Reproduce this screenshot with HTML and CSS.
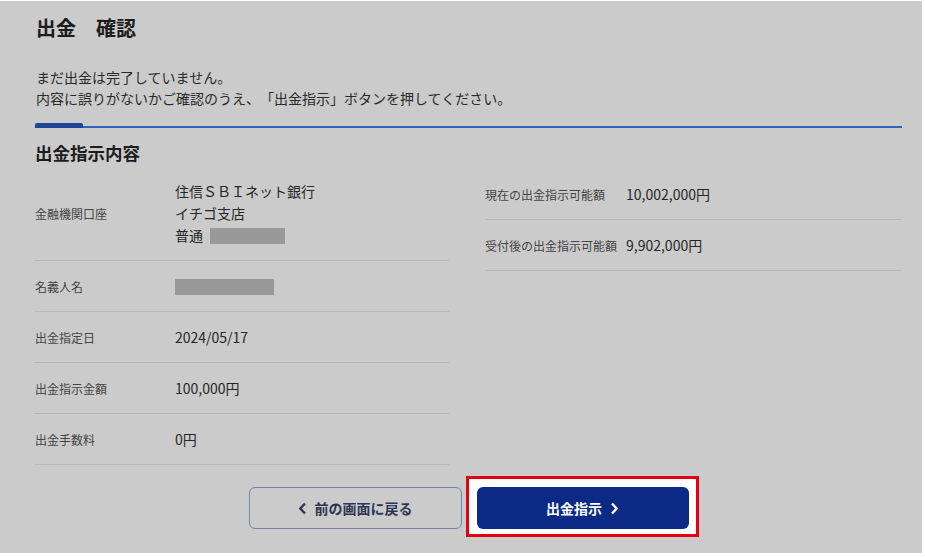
FILE: index.html
```html
<!DOCTYPE html>
<html lang="ja">
<head>
    <meta charset="UTF-8">
    <title>出金 確認</title>
    <link rel="stylesheet" href="styles.css">
</head>
<body>
    <div class="page">
        <h1 class="title">出金　確認</h1>

        <p class="notice">
            まだ出金は完了していません。<br>
            内容に誤りがないかご確認のうえ、「出金指示」ボタンを押してください。
        </p>

        <div class="rule"></div>

        <h2 class="section-title">出金指示内容</h2>

        <div class="detail">
            <div class="detail-col">
                <div class="row">
                    <span class="label">金融機関口座</span>
                    <span class="value">
                        住信ＳＢＩネット銀行<br>
                        イチゴ支店<br>
                        普通 <span class="masked masked-short"></span>
                    </span>
                </div>
                <div class="row">
                    <span class="label">名義人名</span>
                    <span class="value"><span class="masked masked-long"></span></span>
                </div>
                <div class="row">
                    <span class="label">出金指定日</span>
                    <span class="value">2024/05/17</span>
                </div>
                <div class="row">
                    <span class="label">出金指示金額</span>
                    <span class="value">100,000円</span>
                </div>
                <div class="row">
                    <span class="label">出金手数料</span>
                    <span class="value">0円</span>
                </div>
            </div>

            <div class="detail-col detail-col-side">
                <div class="row">
                    <span class="label">現在の出金指示可能額</span>
                    <span class="value">10,002,000円</span>
                </div>
                <div class="row">
                    <span class="label">受付後の出金指示可能額</span>
                    <span class="value">9,902,000円</span>
                </div>
            </div>
        </div>

        <div class="actions">
            <button class="btn btn-back">
                <svg width="9" height="13" viewBox="0 0 9 13"><path d="M7 1.5 2.3 6.5 7 11.5" fill="none" stroke="currentColor" stroke-width="2.4"/></svg>
                前の画面に戻る
            </button>
            <span class="highlight">
                <button class="btn btn-submit">
                    出金指示
                    <svg width="9" height="13" viewBox="0 0 9 13"><path d="M2 1.5 6.7 6.5 2 11.5" fill="none" stroke="currentColor" stroke-width="2.4"/></svg>
                </button>
            </span>
        </div>
    </div>
</body>
</html>
```

FILE: styles.css
```css
body {
    margin: 0;
    background: #fff;
    font-family: "Noto Sans CJK JP", "Noto Sans", sans-serif;
    color: #222;
    text-spacing-trim: space-all;
}

.page {
    box-sizing: border-box;
    width: 922px;
    height: 552px;
    margin-top: 1px;
    padding: 13px 20px 0 36px;
    background: #cbcbcb;
}

.title {
    margin: 0;
    font-size: 20px;
    line-height: 28px;
    font-weight: 700;
    color: #1c1c1c;
}

.notice {
    margin: 25px 0 0;
    font-size: 14px;
    line-height: 21px;
    color: #2a2a2a;
}

.rule {
    position: relative;
    height: 2px;
    margin: 17px 0 0 -1px;
    background: #3064b8;
}

.rule::before {
    content: "";
    position: absolute;
    left: 0;
    bottom: 0;
    width: 48px;
    height: 5px;
    border-radius: 2px 2px 0 0;
    background: #1d4496;
}

.section-title {
    margin: 12px 0 0 -1px;
    font-size: 17.5px;
    line-height: 25px;
    font-weight: 700;
    color: #1c1c1c;
}

.detail {
    display: grid;
    grid-template-columns: 414px 416px;
    column-gap: 36px;
    margin: 2px 0 0 -1px;
    align-items: start;
}

.row {
    display: flex;
    align-items: center;
    padding: 14px 0;
    border-bottom: 1px solid #b3b8c0;
}

.row:first-child {
    padding: 13px 0 14px;
}

.label {
    flex: 0 0 140px;
    font-size: 12px;
    line-height: 21px;
    color: #444;
    white-space: nowrap;
}

.value {
    font-size: 14px;
    line-height: 22px;
    color: #262626;
}

.detail-col-side {
    margin-top: 2px;
}

.detail-col-side .label {
    flex-basis: 141px;
}

.detail-col-side .row,
.detail-col-side .row:first-child {
    padding: 14px 0;
}

.masked {
    display: inline-block;
    height: 16px;
    vertical-align: -3px;
    background: #999;
}

.masked-short {
    width: 75px;
    margin-left: 4px;
}

.masked-long {
    width: 99px;
}

.actions {
    display: flex;
    justify-content: center;
    gap: 15px;
    margin-top: 22px;
    padding-right: 1px;
}

.btn {
    display: flex;
    align-items: center;
    justify-content: center;
    gap: 8px;
    width: 213px;
    height: 42px;
    border-radius: 6px;
    font-family: inherit;
    font-size: 14px;
    font-weight: 700;
    cursor: pointer;
}

.btn-back {
    background: transparent;
    color: #2b3655;
    border: 1.5px solid #7584a6;
}

.btn-submit {
    position: relative;
    z-index: 1;
    width: 212px;
    background: #0b2a86;
    color: #fff;
    border: none;
}

.highlight {
    position: relative;
}

.highlight::before {
    content: "";
    position: absolute;
    top: -11px;
    right: -10px;
    bottom: -8px;
    left: -11px;
    border: 3px solid #e3000f;
    background: #fff;
}
```
